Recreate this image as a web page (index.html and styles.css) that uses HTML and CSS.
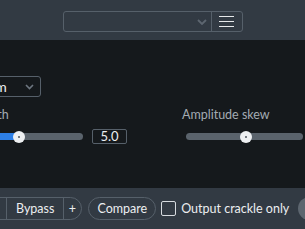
FILE: index.html
```html
<!DOCTYPE html>
<html>
<head>
<meta charset="utf-8">
<link rel="stylesheet" href="styles.css">
</head>
<body>
<div class="app">
  <header class="topbar">
    <div class="preset">
      <div class="preset-name">
        <svg class="chev" width="10" height="6" viewBox="0 0 10 6"><polyline points="1,1 5,5 9,1" fill="none" stroke="#5d6670" stroke-width="1.8"/></svg>
      </div>
      <div class="preset-menu"><span></span><span></span><span></span></div>
    </div>
  </header>
  <main class="controls">
    <div class="lbl lbl-quality">Quality</div>
    <div class="select">
      <span class="select-text">Medium</span>
      <svg class="select-chev" width="9" height="6" viewBox="0 0 9 6"><polyline points="1,1 4.5,4.5 8,1" fill="none" stroke="#6d7680" stroke-width="1.6"/></svg>
    </div>
    <div class="lbl lbl-strength">Strength</div>
    <div class="slider-row slider-strength">
      <div class="track track-strength">
        <div class="fill" style="width:50%"></div>
        <div class="thumb" style="left:50%"></div>
      </div>
      <div class="num">5.0</div>
    </div>
    <div class="lbl lbl-skew">Amplitude skew</div>
    <div class="slider-row slider-skew">
      <div class="track track-skew">
        <div class="thumb" style="left:51%"></div>
      </div>
    </div>
  </main>
  <footer class="bottombar">
    <div class="seg-group">
      <div class="seg seg-preview">Preview</div>
      <div class="seg">Bypass</div>
      <div class="seg seg-plus">+</div>
    </div>
    <div class="pill">Compare</div>
    <div class="check"></div>
    <div class="check-label">Output crackle only</div>
    <div class="render"></div>
  </footer>
</div>
</body>
</html>
```
FILE: styles.css
```css
* { box-sizing: border-box; }
html, body {
  margin: 0;
  padding: 0;
  width: 305px;
  height: 229px;
  overflow: hidden;
  background: #15191c;
  font-family: "Lato", "Noto Sans", sans-serif;
  font-size: 12.5px;
}
.app {
  display: flex;
  flex-direction: column;
  width: 305px;
  height: 229px;
}
.topbar {
  height: 40px;
  background: #323a43;
  display: flex;
  justify-content: center;
  align-items: flex-start;
  padding-top: 11px;
  flex: none;
}
.preset {
  width: 180px;
  height: 21px;
  border: 1px solid #56606a;
  border-radius: 3px;
  display: flex;
}
.preset-name {
  flex: 1;
  display: flex;
  align-items: center;
  justify-content: flex-end;
  padding-right: 4px;
  border-right: 1px solid #56606a;
}
.chev { display: block; }
.preset-menu {
  width: 30px;
  display: flex;
  flex-direction: column;
  align-items: center;
  justify-content: center;
  gap: 4px;
}
.preset-menu span {
  display: block;
  width: 15px;
  height: 1px;
  background: #e6e8ea;
}
.controls {
  flex: 1;
  display: grid;
  grid-template-columns: 174px 155px;
  column-gap: 54px;
  align-content: start;
  margin-left: -46px;
  padding-top: 4px;
}
.lbl {
  color: #a3abb3;
  line-height: 16px;
  height: 16px;
  white-space: nowrap;
}
.lbl-quality { grid-row: 1; grid-column: 1; padding-left: 5px; }
.select {
  grid-row: 2; grid-column: 1;
  width: 87px;
  height: 21px;
  margin-top: 16px;
  border: 1px solid #56606a;
  border-radius: 3px;
  display: flex;
  align-items: center;
  justify-content: space-between;
  padding: 0 6px 0 1px;
}
.select-text {
  color: #eceef0;
  font-size: 14px;
}
.select-chev { display: block; }
.lbl-strength { grid-row: 3; grid-column: 1; margin-top: 10px; padding-left: 8px; }
.lbl-skew { grid-row: 3; grid-column: 2; margin-top: 10px; }
.slider-row {
  display: flex;
  align-items: center;
  gap: 9px;
  height: 15px;
  margin-top: 6px;
}
.slider-strength { grid-row: 4; grid-column: 1; }
.slider-skew { grid-row: 4; grid-column: 2; padding-left: 4px; }
.track {
  position: relative;
  height: 7px;
  border-radius: 4px;
  background: #5a636c;
  flex: none;
}
.track-strength { width: 129px; }
.track-skew { width: 117px; }
.fill {
  height: 100%;
  background: #2d7fe6;
  border-radius: 4px 0 0 4px;
}
.thumb {
  position: absolute;
  top: 50%;
  width: 12px;
  height: 12px;
  margin: -6px 0 0 -6px;
  border-radius: 50%;
  background: #eef0f2;
}
.thumb::after {
  content: "";
  position: absolute;
  left: 5px;
  top: 5px;
  width: 2px;
  height: 2px;
  border-radius: 50%;
  background: #4b535b;
}
.num {
  flex: none;
  width: 35px;
  height: 15px;
  border: 1px solid #56606a;
  border-radius: 2px;
  color: #eceef0;
  text-align: center;
  line-height: 13px;
  font-size: 13px;
}
.bottombar {
  height: 41px;
  flex: none;
  background: #323a43;
  display: flex;
  align-items: center;
  margin-left: -59px;
  color: #eceef0;
  white-space: nowrap;
}
.bottombar > * { flex: none; }
.seg-group {
  display: flex;
  height: 23px;
  border: 1px solid #56606a;
  border-radius: 12px;
}
.seg {
  line-height: 21px;
  padding: 0 9px;
  border-left: 1px solid #56606a;
}
.seg-preview { border-left: none; width: 64px; padding: 0 10px 0 0; text-align: right; }
.seg-plus { width: 18px; padding: 0 1px 0 0; text-align: center; }
.pill {
  margin-left: 6px;
  height: 23px;
  line-height: 21px;
  border: 1px solid #56606a;
  border-radius: 12px;
  padding: 0 8px;
}
.check {
  margin-left: 5px;
  width: 15px;
  height: 15px;
  border: 1.5px solid #d7dbdf;
  border-radius: 2px;
}
.check-label { margin-left: 5px; }
.render {
  margin-left: 9px;
  width: 40px;
  height: 23px;
  border-radius: 12px;
  background: #5d666f;
}
```
